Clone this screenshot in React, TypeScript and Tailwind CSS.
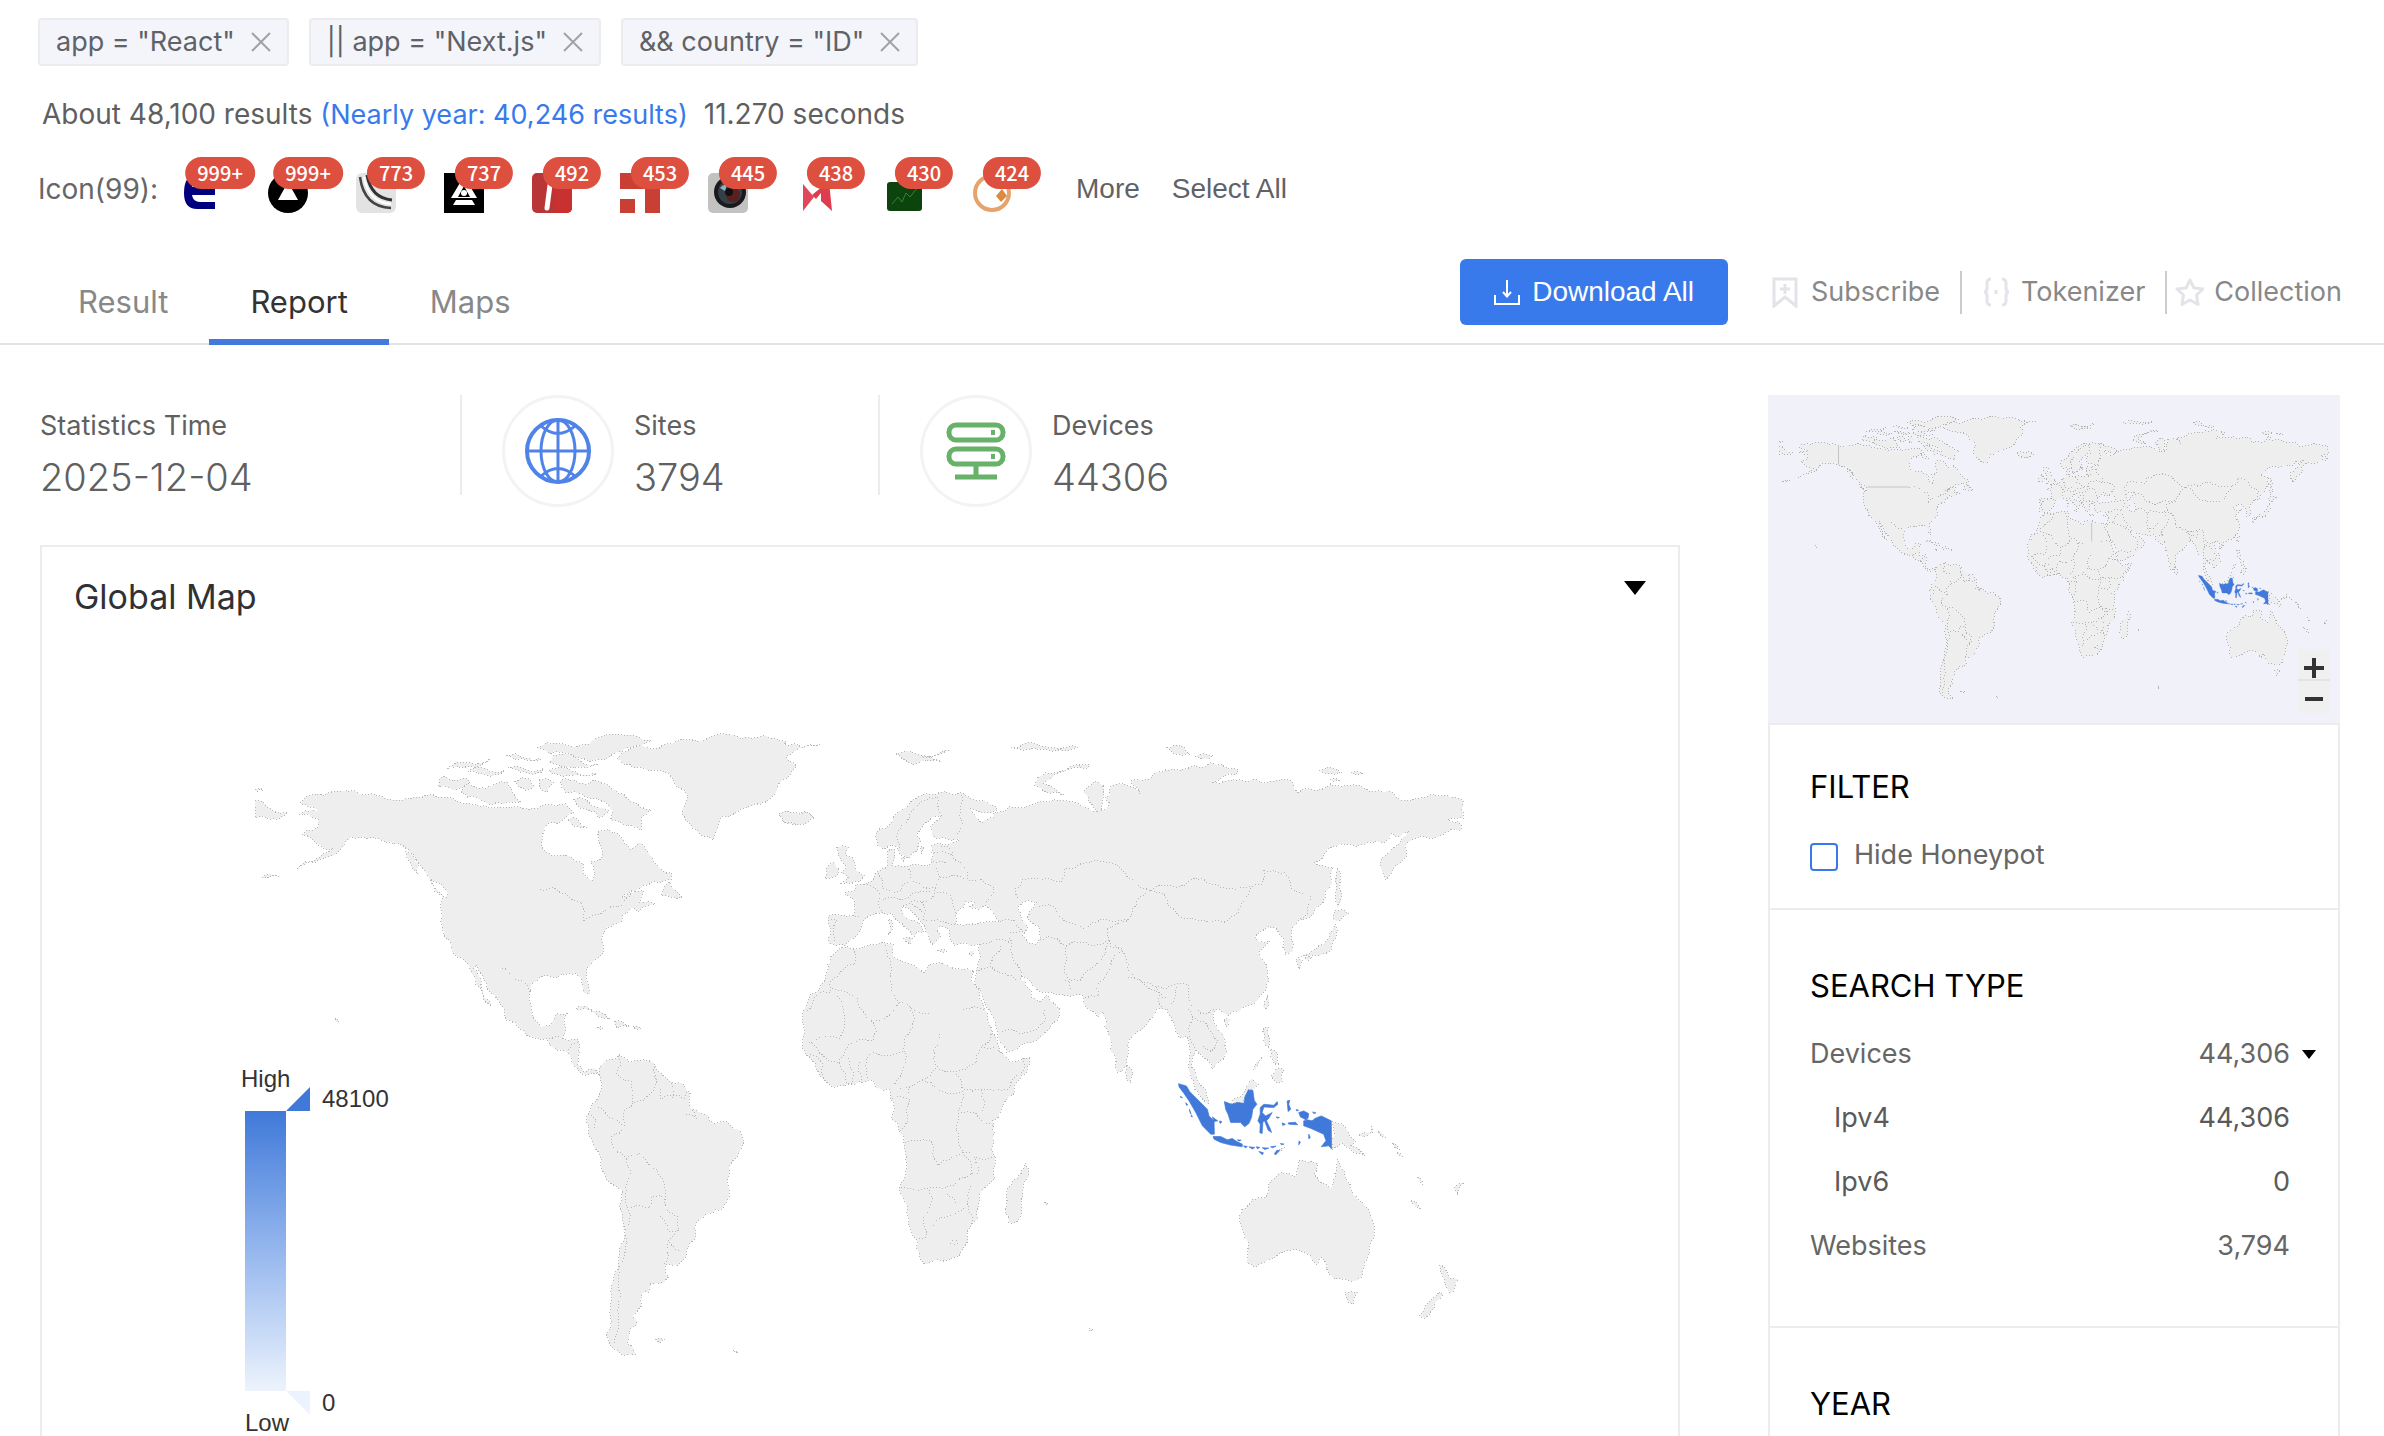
import React from "react";

type Point = [number, number];

const parse = (text: string): Point[] =>
  text
    .trim()
    .split(/\s+/)
    .map((pair) => pair.split(",").map(Number) as Point);

// Splits each long segment at a displaced midpoint, so coasts look natural.
function roughen(points: Point[], amount: number): Point[] {
  let seed = 7;
  const next = () => {
    seed = (seed * 16807) % 2147483647;
    return seed / 2147483647 - 0.5;
  };
  let list = points;
  for (let pass = 0; pass < 3; pass++) {
    const out: Point[] = [];
    for (let i = 0; i < list.length; i++) {
      const a = list[i];
      out.push(a);
      if (i === list.length - 1) break;
      const b = list[i + 1];
      const dx = b[0] - a[0];
      const dy = b[1] - a[1];
      if (Math.hypot(dx, dy) < 6) continue;
      const k = next() * amount;
      out.push([(a[0] + b[0]) / 2 - dy * k, (a[1] + b[1]) / 2 + dx * k]);
    }
    list = out;
  }
  return list;
}

const toPath = (points: Point[]) =>
  "M" + points.map((p) => `${Math.round(p[0] * 10) / 10} ${Math.round(p[1] * 10) / 10}`).join("L");

const area = (text: string) =>
  text
    .split(";")
    .map((ring) => {
      const pts = parse(ring);
      return toPath(roughen([...pts, pts[0]], 0.3)) + "Z";
    })
    .join("");

const line = (text: string) =>
  text
    .split(";")
    .map((part) => toPath(roughen(parse(part), 0.3)))
    .join("");

const plain = (text: string) =>
  text
    .split(";")
    .map((ring) => toPath(parse(ring)) + "Z")
    .join("");

const WEST_LAND = area(`150,228 180,210 235,202 300,210 350,214 400,222 440,215 475,210 510,215 560,228 600,235 640,238 690,238 740,235 775,235 800,230 820,250 800,262 755,275 742,300 742,322 760,342 785,345 830,360 845,365 845,388 865,402 872,385 862,360 888,352 885,325 878,295 905,288 930,298 945,320 960,333 985,318 1000,335 1020,365 1060,385 1058,400 1030,408 990,412 960,425 935,440 975,425 990,425 980,450 1020,455 980,472 965,462 940,480 935,495 910,505 890,525 893,560 870,580 850,600 850,620 860,655 848,655 838,620 825,610 790,612 770,620 740,618 720,632 715,680 722,710 740,730 765,725 778,700 803,700 800,735 793,755 830,757 833,790 830,815 845,830 870,822 885,840 878,835 850,838 820,815 800,785 760,770 755,755 725,755 690,735 655,715 650,690 620,655 600,625 582,590 575,600 595,640 618,683 605,675 580,635 568,605 555,585 530,570 515,535 498,510 497,470 500,440 470,405 450,375 420,340 390,320 350,312 300,305 275,305 255,325 240,340 200,355 140,380 190,352 230,330 190,320 155,300 165,290 195,280 195,265 145,255 195,248 175,238;
885,820 905,803 930,792 955,808 1015,810 1040,840 1060,855 1090,858 1105,880 1105,910 1150,930 1155,942 1195,942 1228,965 1235,990 1215,1025 1200,1045 1198,1090 1185,1135 1150,1148 1122,1165 1118,1200 1095,1235 1075,1265 1045,1262 1052,1290 1040,1302 1008,1305 1003,1325 988,1325 985,1355 965,1375 975,1395 955,1415 950,1440 975,1462 945,1465 915,1450 900,1420 908,1370 915,1300 930,1245 938,1160 940,1098 895,1060 875,1005 855,970 855,925 880,885 885,850;
925,128 985,100 1070,90 1130,90 1210,77 1290,78 1340,90 1335,98 1422,98 1365,110 1340,125 1365,145 1345,170 1320,190 1310,210 1280,230 1255,235 1215,252 1185,258 1170,290 1160,312 1135,303 1110,285 1085,245 1100,215 1070,190 1055,165 1020,155 970,150 940,140;
1322,254 1335,252 1365,255 1390,248 1408,262 1385,275 1360,278 1335,272;
730,105 780,95 880,82 1010,88 960,105 900,130 860,135 815,120 760,118;
545,205 560,185 620,190 655,180 675,215 690,225 650,230 600,225 560,215;
488,190 500,168 555,172 565,182 530,200;
785,180 820,178 880,180 920,200 960,225 1010,245 985,262 985,290 950,280 910,265 915,245 895,225 850,215 800,205;
560,158 600,150 648,156 640,164 590,164;510,152 560,138 615,128 610,136 550,150;
760,155 820,158 875,162 820,167 765,163;675,180 712,174 725,192 700,200;735,175 770,182 755,205 738,198;
655,122 695,126 740,130 700,132;660,150 705,155 745,150 740,160 690,160;770,122 830,130 880,142 820,150 760,138;
805,265 825,262 852,283 820,280;1035,435 1055,405 1070,425 1085,440 1060,440;
40,222 75,240 120,250 95,265 60,258 40,262;825,690 850,682 885,695 907,712 880,705 850,690;
920,718 955,728 925,733;878,730 892,732 884,735;966,730 985,733 975,735;235,710 245,718 238,720;1020,1430 1043,1430 1030,1437;
820,220 850,220 880,238 905,245 880,262 870,248 835,240;408,335 440,362 438,388 420,365;470,400 512,432 508,440 480,418;40,198 60,200 42,203;55,395 98,392 70,396;1210,1455 1222,1459 1214,1458`);

const EAST_LAND = area(`108,543 112,520 107,500 108,480 130,478 160,480 165,470 162,445 145,435 143,428 165,425 165,412 185,410 205,398 215,380 235,372 236,350 235,335 252,332 252,350 245,368 262,368 280,370 295,366 325,370 332,350 335,340 330,325 345,318 390,315 390,309 345,308 332,300 330,280 350,262 355,255 340,258 315,275 300,295 308,312 300,335 280,352 270,350 258,328 245,322 228,332 215,325 210,300 215,290 245,272 280,235 290,222 320,208 365,204 400,206 420,220 470,235 475,245 455,250 440,250 415,240 425,255 440,272 450,265 468,262 465,250 490,248 500,236 520,238 560,230 610,222 640,225 672,240 695,248 680,230 662,205 680,185 690,180 705,190 705,215 700,246 713,240 718,228 710,215 720,210 722,190 740,185 760,190 785,208 780,195 765,180 810,172 815,162 850,155 880,152 915,148 940,138 965,142 1000,155 995,165 945,182 980,178 1010,180 1060,184 1080,178 1115,180 1120,195 1130,205 1145,195 1180,198 1200,186 1230,190 1270,192 1310,203 1335,205 1345,218 1400,215 1440,213 1480,218 1489,225 1489,262 1455,266 1480,270 1485,288 1450,295 1415,308 1390,305 1375,312 1362,325 1366,345 1340,370 1320,400 1312,380 1312,350 1335,330 1365,300 1370,290 1345,305 1335,295 1315,318 1280,318 1240,320 1205,325 1185,345 1165,362 1180,368 1205,372 1202,410 1185,450 1155,485 1130,492 1115,510 1120,545 1118,560 1100,568 1098,535 1085,515 1065,505 1050,515 1035,528 1045,540 1068,537 1045,560 1060,590 1065,620 1050,655 1030,680 1000,695 975,705 955,690 945,700 955,735 970,755 973,790 955,810 942,825 940,812 925,800 915,790 905,780 900,800 898,820 910,850 928,870 935,903 925,895 905,870 895,840 892,800 885,750 870,755 862,730 850,705 845,690 820,692 810,710 780,740 760,760 758,800 745,830 737,832 720,780 708,730 705,695 692,708 675,690 662,675 660,660 625,660 600,658 580,652 560,645 545,625 530,612 525,620 540,640 550,665 568,672 582,658 590,672 610,690 605,715 580,740 545,765 495,787 485,770 470,720 445,670 425,635 430,610 437,570 437,545 410,545 380,548 372,535 370,512 355,505 345,505 345,515 350,530 335,545 325,525 318,505 305,490 285,468 268,458 266,468 285,490 310,505 315,518 300,515 295,528 285,515 260,495 245,475 225,478 205,478 185,490 178,510 165,530 145,548 125,548;
385,495 390,470 405,450 425,452 415,460 440,465 445,458 465,470 480,495 430,500 400,502 380,500;
520,460 545,447 560,450 545,470 540,485 565,505 568,530 560,545 540,543 530,525 540,510 528,490;
130,555 160,555 185,550 215,545 248,543 250,575 275,585 315,608 325,590 350,585 385,600 410,600 425,605 418,620 435,665 455,720 470,750 485,790 500,808 548,798 540,830 510,880 485,910 465,940 465,980 470,1020 470,1070 435,1105 433,1160 415,1180 410,1210 385,1245 355,1255 315,1260 305,1245 300,1210 285,1180 278,1130 262,1085 275,1030 268,970 245,930 240,870 215,868 205,850 165,858 120,866 100,850 80,825 70,800 50,775 55,740 50,700 65,660 100,625 105,590 125,560;
125,328 150,328 145,345 160,352 165,375 185,390 175,405 135,408 150,395 135,385 145,375 130,350;103,375 120,362 130,375 125,392 100,398;
555,190 580,160 630,150 675,143 670,150 600,165 575,185 620,210 580,205;253,118 300,118 370,110 310,125 352,136 320,132 290,143 270,130;
845,105 880,102 895,120 860,118;905,125 945,122 935,130;1175,155 1215,153 1225,160 1190,163;1245,160 1272,163 1258,166;1200,175 1222,178 1205,180;505,105 580,102 650,103 560,108;
1215,375 1222,400 1225,435 1215,462 1212,430 1210,400;1210,468 1240,475 1222,492 1205,490;1210,500 1212,530 1202,555 1190,565 1160,570 1130,575 1160,560 1185,545 1198,520;1125,580 1140,582 1132,600;1145,576 1160,574 1152,580;
1063,662 1060,695 1053,685;968,715 985,712 975,730;1053,735 1065,730 1068,755 1065,775 1055,765;1070,780 1085,790 1088,815 1075,810;1080,825 1098,825 1095,852 1085,855 1070,840;1033,827 1052,797 1042,815;
757,815 770,835 765,855 755,845;535,1035 543,1065 530,1110 518,1165 500,1170 492,1140 497,1090 525,1060;
1007,1138 1060,1110 1065,1085 1095,1055 1122,1065 1130,1030 1172,1035 1165,1062 1200,1090 1210,1065 1215,1025 1228,1050 1243,1090 1260,1115 1292,1160 1295,1200 1280,1250 1268,1290 1245,1300 1205,1293 1190,1270 1182,1245 1170,1262 1155,1240 1130,1230 1080,1245 1060,1255 1035,1267 1015,1255 1020,1235 1010,1190 1002,1160;
1232,1325 1258,1325 1250,1350 1240,1348;1437,1262 1455,1280 1460,1292 1477,1295 1460,1328 1450,1312;1435,1325 1445,1330 1425,1360 1405,1382 1393,1375 1410,1350;
1204,940 1240,965 1255,985 1245,995 1275,1018 1250,1010 1225,990 1204,1005;1262,972 1285,968 1288,950 1292,965 1270,977;1305,965 1322,980 1312,976;1335,990 1350,1005 1342,1002;1345,1010 1358,1022 1350,1018;1390,1065 1402,1085 1396,1078;1375,1118 1397,1138 1385,1132;1470,1090 1490,1078 1476,1102;
238,490 243,490 242,520 237,522;270,532 290,532 285,545;345,558 370,562 355,563;412,565 428,558 420,570;0,252 35,250 60,248 75,262 45,278 10,272;265,345 275,350 270,358;308,325 315,330 310,342;675,1405 684,1408 677,1412;578,1122 586,1126 580,1128`);

const EAST_BORDERS = line(`810,425 850,412 880,415 905,395 940,410 985,420 1030,415 1010,450 1000,475 970,495 920,492 875,485 845,455 835,430 810,425;
520,440 515,420 530,400 560,397 615,405 622,375 680,360 740,370 780,410 810,425 780,445 760,490 715,510 720,540 750,565 760,605 800,630 840,645 890,635 895,680 920,700 945,690 955,690;
760,620 800,640 820,648;1030,415 1050,410 1055,380 1100,385 1115,420 1155,435 1150,475 1130,492;565,460 600,462 640,500 665,510 700,490 760,490;
568,535 605,532 625,548 620,600 635,650;625,548 665,540 700,545 720,535 690,590 655,625 620,625;720,550 745,560 720,600 690,640 695,660 665,665;
820,640 825,670 840,690;865,640 850,680;820,650 835,665 845,660;890,690 900,710 895,760 905,780;905,710 940,740 955,760 940,785 920,770;
500,530 505,560 525,600 528,615;437,545 500,540;430,610 460,595 490,610 520,625;460,595 480,560 480,545;485,740 530,745 580,715 575,690;480,495 510,490 530,515 500,520;
395,210 395,240 400,275 385,302;352,325 378,335 378,350 405,375 410,400 440,400 468,420 462,440 450,450;330,340 375,345;335,360 365,365;
280,370 285,400 340,418 350,395 340,365;350,395 405,400;215,385 225,420 265,425 270,410 285,405;185,410 220,435 225,478;225,445 270,445 290,430 330,425;
270,460 310,450 340,430 370,430 380,460 385,480;310,450 315,490 340,490 375,500;290,455 310,475;340,418 330,440;112,490 125,490 122,540;160,480 180,490;
262,330 265,280 285,250 310,225 345,215 348,250;160,555 165,590 140,600 110,630 110,653 85,653 60,695;110,640 205,720 260,675 245,650 245,600 235,570 232,545;
127,660 132,755 65,765;260,675 285,685 325,700;285,685 290,730 272,775 275,810 250,860;205,720 205,760 150,770 130,810;195,850 200,785 270,785;
350,745 337,780 345,820 310,850 260,870;465,740 440,775 430,810 385,830 345,825;400,690 445,692;440,775 485,790;530,800 530,830 500,870 440,870 400,870 385,830;
245,890 285,892 280,940 262,965;310,850 345,870 400,875 390,920 385,960 400,1010 345,1040 335,1015 330,985 270,990;390,925 430,925 465,950;
400,1010 420,1060 380,1085 340,1090 265,1090;400,1010 425,1020 470,1020;327,1095 327,1135 315,1170 320,1200 300,1205;335,1175 375,1150 410,1125 415,1085;
410,1125 415,1180;365,1105 385,1125;425,1020 430,1060;65,765 90,790 130,810 150,860;100,850 95,815 65,790;180,855 178,800;150,800 155,860;372,1215 385,1205 388,1215 378,1218;285,890 285,860;440,872 440,920`);

const WEST_BORDERS = line(`930,795 925,835 960,850 965,900 990,895 1020,860 1018,815;1035,890 1090,890 1095,870;1060,855 1060,890;965,900 945,915 945,950 875,908;
945,950 912,975 920,1005 950,1025 980,1012 1025,1050 1040,1080 1045,1135 1075,1155 1078,1185 1050,1210 1078,1230;950,1025 948,1095 960,1150 945,1190 940,1250 930,1310 930,1380 920,1440;
960,1135 1005,1135 1010,1110 1040,1108;1025,1150 1050,1185 1078,1185;855,925 875,940 870,960;1050,1215 1040,1262;738,422 800,432 840,450 845,495 870,480 905,462 935,460 960,430;
645,598 670,620 695,625 715,650;760,755 790,755;800,785 835,765;1018,840 1030,895;1095,925 1120,935 1110,915`);

const INDONESIA = plain(`238,128 262,135 272,152 300,180 325,205 330,225 345,240 346,280 335,280 310,255 290,215 270,180 255,158 240,138;
342,287 365,287 385,297 400,293 415,303 430,310 430,318 395,313 365,305 345,295;
376,182 398,190 415,185 435,187 438,168 448,147 462,148 466,178 474,190 462,205 458,230 450,248 437,258 425,245 395,245 388,222 380,205;
484,200 495,190 525,193 535,182 537,190 525,200 495,198 490,215 500,225 520,215 510,232 503,240 515,265 518,275 508,268 497,240 492,245 490,278 483,276 484,250 477,240 484,220;
565,180 573,178 570,190 576,205 568,212;
600,215 615,210 630,218 628,232 618,235 640,240 650,232 668,225 698,240 699,325 690,315 668,318 682,300 675,280 635,262 615,255 615,240 625,238 605,228;
550,246 560,250 552,254;568,246 590,244 597,252 570,250;434,315 445,317 440,322;450,318 468,320 460,325;472,318 483,320 476,324;490,321 510,322 498,326;515,318 532,316 522,321;
480,332 494,336 490,342;527,338 535,328 542,330 530,343;340,228 356,240 345,242;362,240 369,243 363,248;244,166 250,170 245,170;260,185 266,192 262,193;271,205 276,220 273,216;277,222 280,228 276,227;
630,280 635,290 630,294;601,300 605,305 600,312;642,213 652,216 645,218;592,206 600,208 594,210;532,228 542,230 535,232;415,297 427,298 420,301;545,308 556,310 548,312`);

const MALAY_BORNEO = plain(`398,188 405,172 428,165 450,125 458,113 478,130 465,145 448,147 438,168 432,187 415,185;540,328 560,318 548,330`);

function WorldMap({ className, small = false }: { className: string; small?: boolean }) {
  const stroke = {
    stroke: small ? "#b4b4b4" : "#b8b8b8",
    strokeWidth: 1,
    strokeDasharray: "1 2",
    vectorEffect: "non-scaling-stroke" as const,
    shapeRendering: "crispEdges" as const,
  };
  const land = { fill: "#eeeeee", fillRule: "evenodd" as const };
  return (
    <svg viewBox="256 730 1210 632" className={className} role="img" aria-label="World map, Indonesia highlighted">
      <g transform="translate(240 700) scale(0.40816 0.44643)">
        <path d={WEST_LAND} {...land} {...stroke} />
        <path d={WEST_BORDERS} fill="none" {...stroke} />
        {small && <path d="M517 422H738M360 214V312" fill="none" stroke="#c4c4c4" vectorEffect="non-scaling-stroke" />}
      </g>
      <g transform="translate(780 700) scale(0.45918 0.44643)">
        <path d={EAST_LAND} {...land} {...stroke} />
        <path d={EAST_BORDERS} fill="none" {...stroke} />
        {small && <path d="M357 598V690" fill="none" stroke="#c4c4c4" vectorEffect="non-scaling-stroke" />}
      </g>
      <g transform="translate(1100 1040) scale(0.332)">
        <path d={MALAY_BORNEO} {...land} {...stroke} />
        <path d={INDONESIA} fill="#4079d9" stroke="#4079d9" strokeWidth={2} />
      </g>
    </svg>
  );
}

const FAVICONS: { count: string; art: React.ReactNode }[] = [
  {
    count: "999+",
    art: (
      <path d="M35 2H14Q4 4 4 20Q4 36 17 36H35V29H20Q13 29 12 22H35V14H12Q14 8 20 8H35Z" fill="#00007f" />
    ),
  },
  {
    count: "999+",
    art: (
      <>
        <circle cx="20" cy="20" r="20" fill="#000" />
        <path d="M20 9L30 27H10Z" fill="#fff" />
      </>
    ),
  },
  {
    count: "773",
    art: (
      <>
        <rect width="40" height="40" rx="6" fill="#e3e3e3" />
        <path d="M4 4Q8 34 35 35" stroke="#444" strokeWidth="2.500" fill="none" />
        <path d="M11 2Q15 25 36 27" stroke="#333" strokeWidth="3" fill="none" />
        <path d="M8 4Q12 29 35 31" stroke="#fff" strokeWidth="2" fill="none" />
      </>
    ),
  },
  {
    count: "737",
    art: (
      <>
        <rect width="40" height="40" fill="#000" />
        <path d="M20 3L33 25H7Z" fill="#fff" />
        <path d="M20 13L26 24H14Z" fill="#000" />
        <circle cx="20" cy="20" r="3" fill="#fff" />
        <path d="M12 27H28L31 32H9Z" fill="#fff" />
      </>
    ),
  },
  {
    count: "492",
    art: (
      <>
        <rect width="40" height="40" rx="5" fill="#b93636" />
        <rect x="22" width="18" height="40" rx="5" fill="#c93030" />
        <path d="M18 12L15 35" stroke="#fff" strokeWidth="5" strokeLinecap="round" />
      </>
    ),
  },
  {
    count: "453",
    art: (
      <>
        <path d="M0 0H40V40H25V16H0Z" fill="#c93f33" />
        <path d="M0 26H15V40H0Z" fill="#c93f33" />
      </>
    ),
  },
  {
    count: "445",
    art: (
      <>
        <rect width="40" height="40" rx="5" fill="#c4c2c0" />
        <circle cx="22" cy="19" r="16" fill="#1a1a1c" />
        <circle cx="22" cy="19" r="12" fill="#33404a" />
        <circle cx="25" cy="22" r="7" fill="#59201f" />
        <circle cx="21" cy="19" r="4" fill="#111" />
        <path d="M12 15Q15 11 19 12L17 18Z" fill="#8ab4c0" />
      </>
    ),
  },
  {
    count: "438",
    art: (
      <>
        <path d="M7 11L18 24L7 38Z" fill="#e0485a" />
        <path d="M16 22L33 8L36 38L25 28V20L20 26Z" fill="#de3d50" />
      </>
    ),
  },
  {
    count: "430",
    art: (
      <>
        <rect x="3" y="9" width="35" height="29" rx="3" fill="#0d440e" />
        <path d="M8 31L14 24L18 29L22 20L26 24L34 14" stroke="#2c8a32" strokeWidth="1" fill="none" />
      </>
    ),
  },
  {
    count: "424",
    art: (
      <>
        <circle cx="20" cy="20" r="17" stroke="#e6a36c" strokeWidth="4" fill="#fff" />
        <path d="M30 16L35 23L29 29L24 23Z" fill="#dc8a3c" />
      </>
    ),
  },
];

const TAGS = ['app = "React"', '|| app = "Next.js"', '&& country = "ID"'];

const ACTIONS = [
  {
    label: "Subscribe",
    spacing: "flex h-[43px] cursor-pointer items-center gap-[10px] pr-5",
    icon: <path d="M2 2H24V29L13 20L2 29ZM13 7V17M8 12H18" strokeWidth="3" />,
  },
  {
    label: "Tokenizer",
    spacing: "flex h-[43px] cursor-pointer items-center gap-[10px] px-5",
    icon: (
      <path
        d="M9 2Q5 2 5 6V11Q5 15 2 15Q5 15 5 19V24Q5 28 9 28M20 2Q24 2 24 6V11Q24 15 27 15Q24 15 24 19V24Q24 28 20 28M14 13V17"
        strokeWidth="3"
      />
    ),
  },
  {
    label: "Collection",
    spacing: "flex h-[43px] cursor-pointer items-center gap-[10px] pl-2",
    icon: (
      <path
        d="M15 3L18.900 11L28 12L21.500 18L23 27.500L15 23L7 27.500L8.500 18L2 12L11.100 11Z"
        strokeWidth="3"
        strokeLinejoin="round"
      />
    ),
  },
];

function Stat({ label, value, icon }: { label: string; value: string; icon: React.ReactNode }) {
  return (
    <div className="flex w-[416px] gap-5 pl-10">
      <div className="flex size-28 shrink-0 items-center justify-center rounded-full border-3 border-[#f3f3f3]">
        {icon}
      </div>
      <StatText label={label} value={value} />
    </div>
  );
}

function StatText({ label, value }: { label: string; value: string }) {
  return (
    <div className="pt-3">
      <div className="text-[27px] leading-[38px] text-[#606060]">{label}</div>
      <div className="mt-2 text-[38px] leading-[48px] font-light text-[#606060]">{value}</div>
    </div>
  );
}

function TypeRow({
  label,
  value,
  nested = false,
  caret = false,
}: {
  label: string;
  value: string;
  nested?: boolean;
  caret?: boolean;
}) {
  return (
    <li className={nested ? "flex h-16 items-center pl-6 text-[#5a5a5a]" : "flex h-16 items-center text-[#666]"}>
      <span className="grow">{label}</span>
      <span>{value}</span>
      <span className="flex w-12 pl-3">
        {caret && (
          <svg viewBox="0 0 14 9" className="h-[9px] w-[14px]">
            <path d="M0 0H14L7 9Z" fill="#000" />
          </svg>
        )}
      </span>
    </li>
  );
}

export default function App() {
  return (
    <div className="flex min-h-screen flex-col bg-white font-[Inter,sans-serif] text-[27px] leading-8 text-[#606266]">
      <div className="flex gap-5 pt-[18px] pl-[38px]">
        {TAGS.map((tag) => (
          <span
            key={tag}
            className="flex h-12 items-center gap-4 rounded border-2 border-[#ececee] bg-[#f4f5fb] px-4 whitespace-pre"
          >
            {tag}
            <button type="button" aria-label={`Remove ${tag}`} className="cursor-pointer">
              <svg viewBox="0 0 20 20" className="size-5" stroke="#a0a2a6" strokeWidth="2">
                <path d="M1 1L19 19M19 1L1 19" />
              </svg>
            </button>
          </span>
        ))}
      </div>

      <p className="mt-8 pl-[42px] text-[28px] leading-8 text-[#5f5f5f]">
        About 48,100 results{" "}
        <a href="#year" className="text-[27px] text-[#387aec]">
          (Nearly year: 40,246 results)
        </a>
        <span className="pl-4">11.270 seconds</span>
      </p>

      <div className="mt-[26px] flex h-16 items-center pl-[38px]">
        <span className="w-[142px] text-[28px] text-[#666]">Icon(99):</span>
        <div className="flex gap-12 pt-2">
          {FAVICONS.map(({ count, art }, i) => (
            <button key={i} type="button" className="relative size-10 cursor-pointer">
              <svg viewBox="0 0 40 40" className="size-10">
                {art}
              </svg>
              <span className="absolute -top-4 left-full h-8 -translate-x-1/2 rounded-full bg-[#dd5040] px-3 font-['Noto_Sans_CJK_SC',sans-serif] text-xl leading-8 font-medium text-white">
                {count}
              </span>
            </button>
          ))}
        </div>
        <div className="flex gap-8 pl-[64px] font-['Liberation_Sans'] text-[28px] text-[#606266]">
          <button type="button" className="cursor-pointer">More</button>
          <button type="button" className="cursor-pointer">Select All</button>
        </div>
      </div>

      <div className="mt-[38px] flex h-[86px] justify-between border-b-2 border-[#dfe5e4] pr-[42px] pl-[37px]">
        <nav className="-mb-[2px] flex text-[31px] text-[#888]">
          <a href="#result" className="flex items-center px-[41px]">Result</a>
          <a href="#report" aria-current="page" className="flex items-center border-b-6 border-[#4379dc] px-[41px] pt-[6px] text-[#333]">
            Report
          </a>
          <a href="#maps" className="flex items-center px-[41px]">Maps</a>
        </nav>
        <div className="flex items-center pb-[18px]">
          <button
            type="button"
            className="mr-11 flex h-[66px] cursor-pointer items-center gap-3 rounded-md bg-[#387aec] px-[34px] font-['Liberation_Sans'] text-[28px] text-white"
          >
            <svg viewBox="0 0 26 26" className="size-[26px]" fill="none" stroke="#fff" strokeWidth="2">
              <path d="M13 1V17M9 13L13 17.500L17 13M1 16V25H25V16" />
            </svg>
            Download All
          </button>
          <div className="flex divide-x-2 divide-[#ccc] text-[#888]">
            {ACTIONS.map(({ label, spacing, icon }) => (
              <button key={label} type="button" className={spacing}>
                <svg viewBox="0 0 29 31" className="h-[31px] w-[29px]" fill="none" stroke="#e3e4ea">
                  {icon}
                </svg>
                {label}
              </button>
            ))}
          </div>
        </div>
      </div>

      <div className="flex grow gap-[88px] pt-[50px] pr-11 pl-10">
        <main className="flex grow flex-col">
          <div className="flex">
            <div className="w-[420px]">
              <StatText label="Statistics Time" value="2025-12-04" />
            </div>
            <div className="h-[100px] w-[2px] bg-[#ececec]" />
            <Stat
              label="Sites"
              value="3794"
              icon={
                <svg viewBox="0 0 66 66" className="size-[66px]" fill="none" stroke="#4f83e8" strokeWidth="4">
                  <circle cx="33" cy="33" r="31" />
                  <ellipse cx="33" cy="33" rx="17" ry="31" strokeWidth="3" />
                  <path d="M33 2V64M2 33H64M16 8Q33 23 50 8M16 58Q33 43 50 58" strokeWidth="3" />
                </svg>
              }
            />
            <div className="h-[100px] w-[2px] bg-[#ececec]" />
            <Stat
              label="Devices"
              value="44306"
              icon={
                <svg viewBox="0 0 60 58" className="h-[58px] w-[60px]" fill="none" stroke="#67b168" strokeWidth="5">
                  <rect x="3" y="3" width="54" height="15" rx="7" />
                  <rect x="3" y="27" width="54" height="15" rx="7" />
                  <path d="M30 42V54M9 55H51" />
                  <path d="M47 8V13M47 32V37" strokeWidth="4" />
                </svg>
              }
            />
          </div>

          <section className="relative mt-[38px] grow overflow-hidden border-2 border-b-0 border-[#ececec]">
            <div className="flex items-start justify-between px-8 pt-[34px]">
              <h2 className="text-[34px] leading-[32px] text-[#303133]">Global Map</h2>
              <button type="button" aria-label="Collapse map" className="cursor-pointer">
                <svg viewBox="0 0 22 14" className="h-[14px] w-[22px]">
                  <path d="M0 0H22L11 14Z" fill="#000" />
                </svg>
              </button>
            </div>
            <WorldMap className="mx-auto mt-[118px] w-[74%]" />

            <div className="absolute top-[516px] left-[199px] font-['Liberation_Sans'] text-2xl leading-6 text-[#333]">
              <div className="pt-1">High</div>
              <div className="-mt-1 flex items-center gap-3 pl-[45px]">
                <svg viewBox="0 0 24 24" className="size-6">
                  <path d="M0 24L24 0V24Z" fill="#4079d9" />
                </svg>
                <span>48100</span>
              </div>
              <div className="ml-1 h-[280px] w-[41px] bg-linear-to-b from-[#4079d9] to-[#edf3fc]" />
              <div className="flex items-center gap-3 pl-[45px]">
                <svg viewBox="0 0 24 24" className="size-6">
                  <path d="M0 0H24V24Z" fill="#edf3fc" />
                </svg>
                <span>0</span>
              </div>
              <div className="-mt-1 pl-1">Low</div>
            </div>
          </section>
        </main>

        <aside className="flex w-[572px] shrink-0 flex-col">
          <div className="relative bg-[#f1f1fa] px-[11px] pt-5 pb-[21px]">
            <WorldMap small className="w-full" />
            <div className="absolute right-[10px] bottom-[10px] flex w-8 flex-col divide-y-2 divide-[#e4e4e4] bg-[#f0f0f0] text-[#333]">
              <button type="button" aria-label="Zoom in" className="flex h-8 cursor-pointer items-center justify-center pt-2">
                <svg viewBox="0 0 20 20" className="size-5" stroke="#333" strokeWidth="4">
                  <path d="M10 0V20M0 10H20" />
                </svg>
              </button>
              <button type="button" aria-label="Zoom out" className="flex h-8 cursor-pointer items-center justify-center pt-1">
                <svg viewBox="0 0 20 20" className="size-5" stroke="#333" strokeWidth="4">
                  <path d="M1 10H19" />
                </svg>
              </button>
            </div>
          </div>
          <div className="flex grow flex-col border-x-2 border-t-2 border-[#ececec]">
            <section className="border-b-2 border-[#ececec] pt-[46px] pb-[37px] pl-10">
              <h3 className="text-[31px] leading-8 text-black">FILTER</h3>
              <label className="mt-9 flex items-center gap-4 text-[#666]">
                <input
                  type="checkbox"
                  className="mt-1 size-7 appearance-none rounded border-2 border-[#387aec] bg-white"
                />
                Hide Honeypot
              </label>
            </section>
            <section className="border-b-2 border-[#ececec] pt-[60px] pb-12 pl-10">
              <h3 className="text-[31px] leading-8 text-black">SEARCH TYPE</h3>
              <ul className="mt-5">
                <TypeRow label="Devices" value="44,306" caret />
                <TypeRow label="Ipv4" value="44,306" nested />
                <TypeRow label="Ipv6" value="0" nested />
                <TypeRow label="Websites" value="3,794" />
              </ul>
            </section>
            <section className="pt-[60px] pl-10">
              <h3 className="text-[31px] leading-8 text-black">YEAR</h3>
            </section>
          </div>
        </aside>
      </div>
    </div>
  );
}
